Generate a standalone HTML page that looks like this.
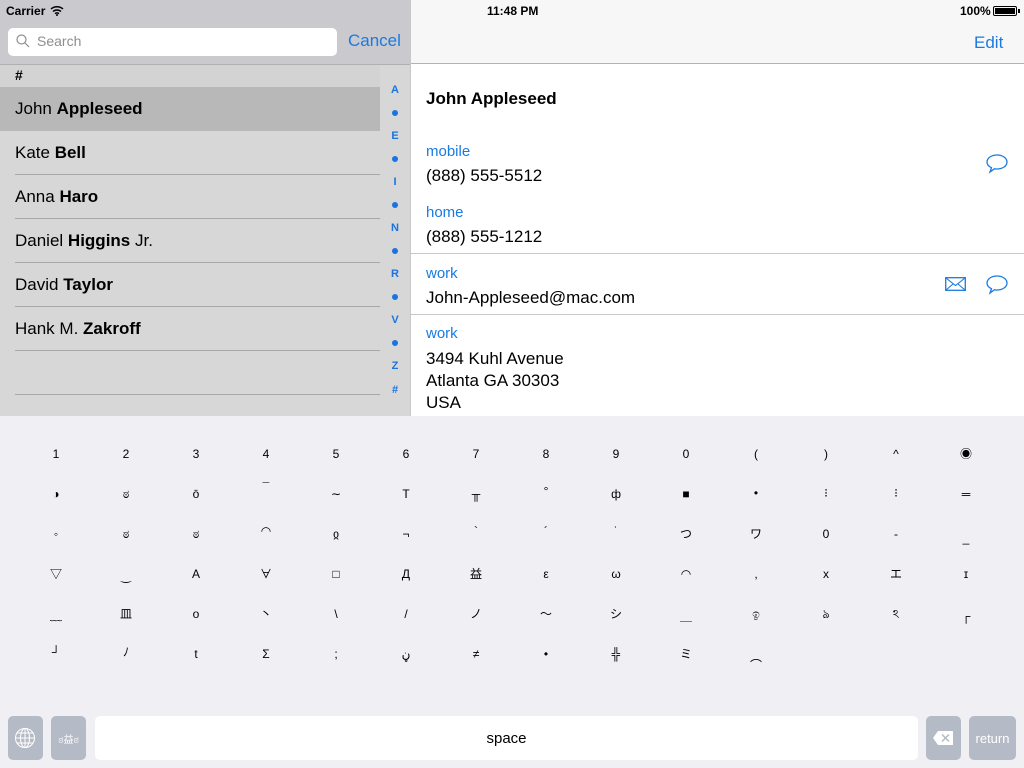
<!DOCTYPE html>
<html><head><meta charset="utf-8"><style>
*{margin:0;padding:0;box-sizing:border-box}
body{width:1024px;height:768px;overflow:hidden;position:relative;font-family:"Liberation Sans","Noto Sans CJK JP",sans-serif;background:#fff}
.a{position:absolute}
.row{position:absolute;left:15px;font-size:17px;color:#000}
.sep{position:absolute;left:15px;width:365px;height:1px;background:#a8a8a8}
.idx{position:absolute;left:380px;width:30px;text-align:center;color:#1a73e0;font-size:11px;font-weight:bold}
.dot{position:absolute;left:392px;width:6px;height:6px;border-radius:3px;background:#1a73e0}
.lbl{position:absolute;left:426px;color:#1a7be0;font-size:15px}
.val{position:absolute;left:426px;color:#000;font-size:17px}
.k{position:absolute;width:40px;margin-left:-20px;text-align:center;font-size:12px;color:#000;line-height:14px}
.key{position:absolute;top:716px;height:44px;border-radius:5px;background:#b4bac6}
</style></head><body>
<!-- left panel -->
<div class="a" style="left:0;top:0;width:410px;height:64px;background:#c9c9ce"></div>
<div class="a" style="left:6px;top:4px;font-size:12px;font-weight:bold">Carrier</div>
<svg class="a" style="left:50px;top:5px" width="14" height="11" viewBox="0 0 14 11"><path d="M1 4a9 9 0 0 1 12 0M3 6.5a6 6 0 0 1 8 0M5 8.7a3 3 0 0 1 4 0" stroke="#000" stroke-width="1.5" fill="none"/><circle cx="7" cy="10" r="1" fill="#000"/></svg>
<div class="a" style="left:8px;top:28px;width:329px;height:28px;background:#fff;border-radius:5px"></div>
<svg class="a" style="left:16px;top:34px" width="14" height="14" viewBox="0 0 14 14"><circle cx="5.5" cy="5.5" r="4.5" stroke="#8e8e93" stroke-width="1.2" fill="none"/><path d="M9 9l4 4" stroke="#8e8e93" stroke-width="1.2"/></svg>
<div class="a" style="left:37px;top:33px;font-size:14px;color:#8e8e93">Search</div>
<div class="a" style="left:348px;top:31px;font-size:17px;color:#1a7be0">Cancel</div>
<div class="a" style="left:0;top:64px;width:410px;height:1px;background:#b0b0b4"></div>
<div class="a" style="left:0;top:65px;width:410px;height:351px;background:#d7d7d7"></div>
<div class="a" style="left:0;top:65px;width:380px;height:22px;background:#d3d3d3"></div>
<div class="a" style="left:15px;top:67px;font-size:14px;font-weight:bold">#</div>
<div class="a" style="left:0;top:87px;width:380px;height:44px;background:#b8b8b8"></div>
<div class="row" style="top:99px">John <b>Appleseed</b></div>
<div class="row" style="top:143px">Kate <b>Bell</b></div>
<div class="sep" style="top:174px"></div>
<div class="row" style="top:187px">Anna <b>Haro</b></div>
<div class="sep" style="top:218px"></div>
<div class="row" style="top:231px">Daniel <b>Higgins</b> Jr.</div>
<div class="sep" style="top:262px"></div>
<div class="row" style="top:275px">David <b>Taylor</b></div>
<div class="sep" style="top:306px"></div>
<div class="row" style="top:319px">Hank M. <b>Zakroff</b></div>
<div class="sep" style="top:350px"></div>
<div class="sep" style="top:394px"></div>
<div class="idx" style="top:84px">A</div><div class="dot" style="top:110px"></div>
<div class="idx" style="top:130px">E</div><div class="dot" style="top:156px"></div>
<div class="idx" style="top:176px">I</div><div class="dot" style="top:202px"></div>
<div class="idx" style="top:222px">N</div><div class="dot" style="top:248px"></div>
<div class="idx" style="top:268px">R</div><div class="dot" style="top:294px"></div>
<div class="idx" style="top:314px">V</div><div class="dot" style="top:340px"></div>
<div class="idx" style="top:360px">Z</div>
<div class="idx" style="top:384px">#</div>
<div class="a" style="left:410px;top:0;width:1px;height:416px;background:#c8c8c8"></div>
<!-- right panel -->
<div class="a" style="left:411px;top:0;width:613px;height:64px;background:#f7f7f7;border-bottom:1px solid #b2b2b2"></div>
<div class="a" style="left:487px;top:4px;font-size:12px;font-weight:bold">11:48 PM</div>
<div class="a" style="left:960px;top:4px;font-size:12px;font-weight:bold">100%</div>
<div class="a" style="left:993px;top:6px;width:24px;height:10px;border:1px solid #000;border-radius:2px;padding:1px"><div style="width:100%;height:100%;background:#000"></div></div>
<div class="a" style="left:1018px;top:9px;width:2px;height:4px;background:#000"></div>
<div class="a" style="left:974px;top:33px;font-size:17px;color:#1a7be0">Edit</div>
<div class="a" style="left:426px;top:89px;font-size:17px;font-weight:bold">John Appleseed</div>
<div class="lbl" style="top:143px">mobile</div>
<div class="val" style="top:166px">(888) 555-5512</div>
<div class="lbl" style="top:204px">home</div>
<div class="val" style="top:227px">(888) 555-1212</div>
<div class="a" style="left:411px;top:253px;width:613px;height:1px;background:#c8c7cc"></div>
<div class="lbl" style="top:265px">work</div>
<div class="val" style="top:288px">John-Appleseed@mac.com</div>
<div class="a" style="left:411px;top:314px;width:613px;height:1px;background:#c8c7cc"></div>
<div class="lbl" style="top:325px">work</div>
<div class="val" style="top:348px;line-height:22px">3494 Kuhl Avenue<br>Atlanta GA 30303<br>USA</div>
<svg class="a" style="left:985px;top:153px" width="24" height="22" viewBox="0 0 24 22"><path d="M12 2C6.5 2 2 5 2 9c0 2.5 1.8 4.5 4.5 5.7L5 19l4.5-3.3c.8.2 1.6.3 2.5.3 5.5 0 10-3 10-7s-4.5-7-10-7z" stroke="#1a7be0" stroke-width="1.3" fill="none"/></svg>
<svg class="a" style="left:985px;top:274px" width="24" height="22" viewBox="0 0 24 22"><path d="M12 2C6.5 2 2 5 2 9c0 2.5 1.8 4.5 4.5 5.7L5 19l4.5-3.3c.8.2 1.6.3 2.5.3 5.5 0 10-3 10-7s-4.5-7-10-7z" stroke="#1a7be0" stroke-width="1.3" fill="none"/></svg>
<svg class="a" style="left:945px;top:277px" width="21" height="14" viewBox="0 0 21 14"><rect x="0.7" y="0.7" width="19.6" height="12.6" stroke="#1a7be0" stroke-width="1.3" fill="none"/><path d="M1 1l9.5 7.5L20 1M1 13l7-6M20 13l-7-6" stroke="#1a7be0" stroke-width="1.1" fill="none"/></svg>
<!-- keyboard -->
<div class="a" style="left:0;top:416px;width:1024px;height:352px;background:#efeff4"></div>
<div id="kb"></div>
<div class="k" style="left:56px;top:447px">1</div><div class="k" style="left:126px;top:447px">2</div><div class="k" style="left:196px;top:447px">3</div><div class="k" style="left:266px;top:447px">4</div><div class="k" style="left:336px;top:447px">5</div><div class="k" style="left:406px;top:447px">6</div><div class="k" style="left:476px;top:447px">7</div><div class="k" style="left:546px;top:447px">8</div><div class="k" style="left:616px;top:447px">9</div><div class="k" style="left:686px;top:447px">0</div><div class="k" style="left:756px;top:447px">(</div><div class="k" style="left:826px;top:447px">)</div><div class="k" style="left:896px;top:447px">^</div><div class="k" style="left:966px;top:447px">◉</div>
<div class="k" style="left:56px;top:487px">◑</div><div class="k" style="left:126px;top:487px">ಠ</div><div class="k" style="left:196px;top:487px">ō</div><div class="k" style="left:266px;top:480px">¯</div><div class="k" style="left:336px;top:487px">∼</div><div class="k" style="left:406px;top:487px">T</div><div class="k" style="left:476px;top:487px">╥</div><div class="k" style="left:546px;top:484px">°</div><div class="k" style="left:616px;top:487px">ф</div><div class="k" style="left:686px;top:487px">■</div><div class="k" style="left:756px;top:486px">•</div><div class="k" style="left:826px;top:486px">⁝</div><div class="k" style="left:896px;top:486px">⁝</div><div class="k" style="left:966px;top:487px">═</div>
<div class="k" style="left:56px;top:527px">◦</div><div class="k" style="left:126px;top:527px">ಠ</div><div class="k" style="left:196px;top:527px">ಠ</div><div class="k" style="left:266px;top:524px">◠</div><div class="k" style="left:336px;top:527px">ჲ</div><div class="k" style="left:406px;top:527px">¬</div><div class="k" style="left:476px;top:524px">`</div><div class="k" style="left:546px;top:524px">´</div><div class="k" style="left:616px;top:524px">˙</div><div class="k" style="left:686px;top:527px">つ</div><div class="k" style="left:756px;top:527px">ワ</div><div class="k" style="left:826px;top:527px">0</div><div class="k" style="left:896px;top:527px">-</div><div class="k" style="left:966px;top:531px">_</div>
<div class="k" style="left:56px;top:567px">▽</div><div class="k" style="left:126px;top:569px">‿</div><div class="k" style="left:196px;top:567px">A</div><div class="k" style="left:266px;top:567px">∀</div><div class="k" style="left:336px;top:567px">□</div><div class="k" style="left:406px;top:567px">Д</div><div class="k" style="left:476px;top:567px">益</div><div class="k" style="left:546px;top:567px">ε</div><div class="k" style="left:616px;top:567px">ω</div><div class="k" style="left:686px;top:567px">◠</div><div class="k" style="left:756px;top:567px">,</div><div class="k" style="left:826px;top:567px">x</div><div class="k" style="left:896px;top:567px">エ</div><div class="k" style="left:966px;top:567px">ɪ</div>
<div class="k" style="left:56px;top:609px">﹏</div><div class="k" style="left:126px;top:607px">皿</div><div class="k" style="left:196px;top:607px">o</div><div class="k" style="left:266px;top:607px">丶</div><div class="k" style="left:336px;top:607px">\</div><div class="k" style="left:406px;top:607px">/</div><div class="k" style="left:476px;top:607px">ノ</div><div class="k" style="left:546px;top:607px">～</div><div class="k" style="left:616px;top:607px">シ</div><div class="k" style="left:686px;top:609px">＿</div><div class="k" style="left:756px;top:607px">ඉ</div><div class="k" style="left:826px;top:607px">ঌ</div><div class="k" style="left:896px;top:607px">ঽ</div><div class="k" style="left:966px;top:609px">┌</div>
<div class="k" style="left:56px;top:645px">┘</div><div class="k" style="left:126px;top:645px">ﾉ</div><div class="k" style="left:196px;top:647px">t</div><div class="k" style="left:266px;top:647px">Σ</div><div class="k" style="left:336px;top:647px">;</div><div class="k" style="left:406px;top:647px">ڼ</div><div class="k" style="left:476px;top:647px">≠</div><div class="k" style="left:546px;top:647px">•</div><div class="k" style="left:616px;top:647px">╬</div><div class="k" style="left:686px;top:647px">ミ</div><div class="k" style="left:756px;top:650px">︵</div>
<div class="key" style="left:8px;width:35px"></div>
<svg class="a" style="left:14px;top:727px" width="22" height="22" viewBox="0 0 22 22" fill="none" stroke="#fff" stroke-width="1"><circle cx="11" cy="11" r="9.5"/><ellipse cx="11" cy="11" rx="4.5" ry="9.5"/><path d="M11 1.5v19M1.5 11h19M3 6h16M3 16h16"/></svg>
<div class="key" style="left:51px;width:35px"></div>
<div class="a" style="left:51px;top:731px;width:35px;text-align:center;font-size:10px;color:#fff;font-family:'Liberation Sans','Noto Sans CJK JP',sans-serif">ಠ益ಠ</div>
<div class="key" style="left:95px;width:823px;background:#fff"></div>
<div class="a" style="left:95px;top:730px;width:823px;text-align:center;font-size:15px">space</div>
<div class="key" style="left:926px;width:35px"></div>
<svg class="a" style="left:932px;top:730px" width="22" height="16" viewBox="0 0 22 16"><path d="M6 1h15v14H6L1 8z" fill="#fff"/><path d="M10 4.5l7 7M17 4.5l-7 7" stroke="#b4bac6" stroke-width="1.5"/></svg>
<div class="key" style="left:969px;width:47px"></div>
<div class="a" style="left:969px;top:731px;width:47px;text-align:center;font-size:13px;color:#fff">return</div>
</body></html>
